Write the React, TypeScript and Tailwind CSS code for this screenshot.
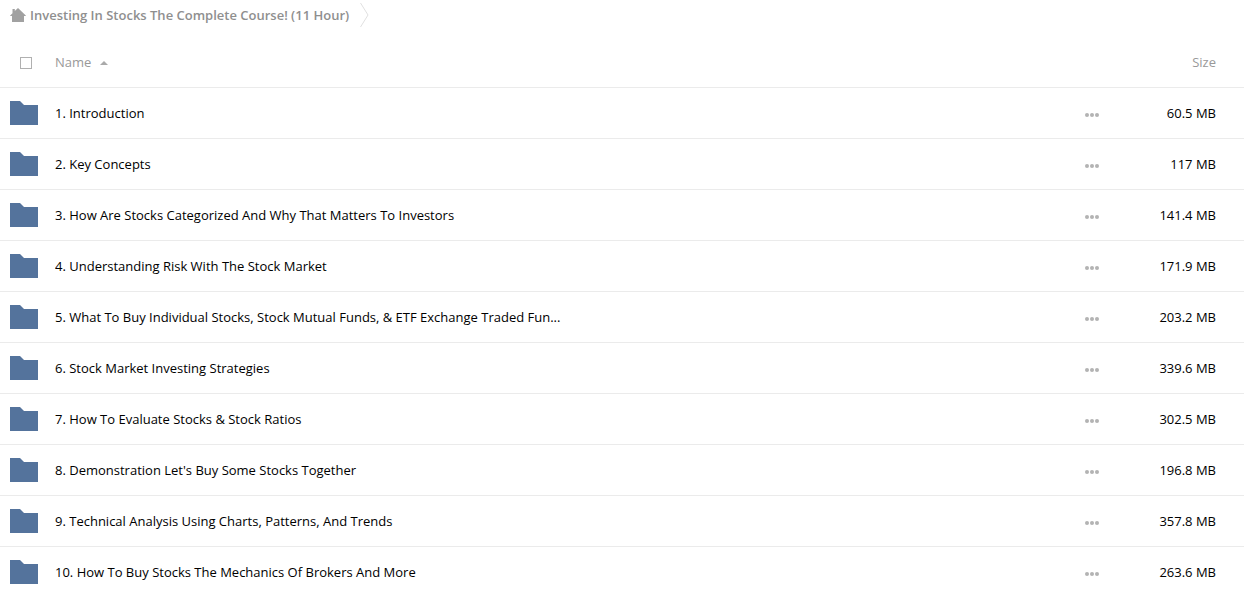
const folders = [
  { name: "1. Introduction", size: "60.5 MB" },
  { name: "2. Key Concepts", size: "117 MB" },
  { name: "3. How Are Stocks Categorized And Why That Matters To Investors", size: "141.4 MB" },
  { name: "4. Understanding Risk With The Stock Market", size: "171.9 MB" },
  {
    name: "5. What To Buy Individual Stocks, Stock Mutual Funds, & ETF Exchange Traded Fun...",
    size: "203.2 MB",
  },
  { name: "6. Stock Market Investing Strategies", size: "339.6 MB" },
  { name: "7. How To Evaluate Stocks & Stock Ratios", size: "302.5 MB" },
  { name: "8. Demonstration Let's Buy Some Stocks Together", size: "196.8 MB" },
  { name: "9. Technical Analysis Using Charts, Patterns, And Trends", size: "357.8 MB" },
  { name: "10. How To Buy Stocks The Mechanics Of Brokers And More", size: "263.6 MB" },
];

function HomeIcon() {
  return (
    <svg className="h-[14px] w-4 shrink-0" viewBox="0 0 16 14" fill="#a1a1a1" aria-hidden="true">
      <path d="M8 0l7.8 7.5V8H14v6H2V8H.2v-.5L2.5 5.3V1h2.3v2.1z" />
    </svg>
  );
}

function FolderIcon() {
  return (
    <svg className="block h-6 w-7" viewBox="0 0 28 24" fill="#54739c" aria-hidden="true">
      <path d="M0 0h10l4 4h14v20H0z" />
    </svg>
  );
}

function DotsIcon() {
  return (
    <svg className="block h-1 w-[14px]" viewBox="0 0 14 4" fill="#b3b3b3" aria-hidden="true">
      <circle cx="2" cy="2" r="2" />
      <circle cx="7" cy="2" r="2" />
      <circle cx="12" cy="2" r="2" />
    </svg>
  );
}

function Breadcrumb() {
  return (
    <nav className="flex h-[37px] items-start pl-[10px]" aria-label="Breadcrumb">
      <a
        className="flex h-[30px] items-center gap-1 whitespace-nowrap font-semibold text-[#8f8f8f]"
        href="#root"
      >
        <HomeIcon />
        Investing In Stocks The Complete Course! (11 Hour)
      </a>
      <svg
        className="ml-[11px] mt-[3px] h-6 w-[9px] shrink-0"
        viewBox="0 0 9 24"
        fill="none"
        stroke="#e0e0e0"
        aria-hidden="true"
      >
        <path d="M.5 0L8 12 .5 24" />
      </svg>
    </nav>
  );
}

export default function App() {
  return (
    <main className="h-screen overflow-hidden bg-white font-['Open_Sans',sans-serif] text-[13px] leading-5 text-black">
      <Breadcrumb />
      <table className="w-full table-fixed border-collapse">
        <thead>
          <tr className="h-[50px] border-b border-[#ebebeb] text-[#999]">
            <th className="w-[55px] p-0 pl-5 text-left">
              <input
                type="checkbox"
                aria-label="Select all"
                className="mt-[3px] block size-3 appearance-none border border-[#b0b0b0] bg-white checked:bg-[#b0b0b0]"
              />
            </th>
            <th className="p-0 text-left font-normal" aria-sort="ascending">
              <button type="button" className="flex items-center gap-[9px]">
                Name
                <svg className="mt-[3px] h-1 w-2" viewBox="0 0 8 4" fill="#aaa" aria-hidden="true">
                  <path d="M0 4l4-4 4 4z" />
                </svg>
              </button>
            </th>
            <th className="w-[59px] p-0" aria-label="Actions" />
            <th className="w-[100px] p-0 pr-7 text-right font-normal">
              <button type="button">Size</button>
            </th>
          </tr>
        </thead>
        <tbody>
          {folders.map((folder) => (
            <tr key={folder.name} className="h-[51px] border-b border-[#ebebeb]">
              <td className="p-0 pl-[10px]">
                <FolderIcon />
              </td>
              <td className="truncate p-0">
                <a href="#folder">{folder.name}</a>
              </td>
              <td className="p-0">
                <button type="button" className="mt-1 block" aria-label={`Options for ${folder.name}`}>
                  <DotsIcon />
                </button>
              </td>
              <td className="whitespace-nowrap p-0 pr-7 text-right">{folder.size}</td>
            </tr>
          ))}
        </tbody>
      </table>
    </main>
  );
}
